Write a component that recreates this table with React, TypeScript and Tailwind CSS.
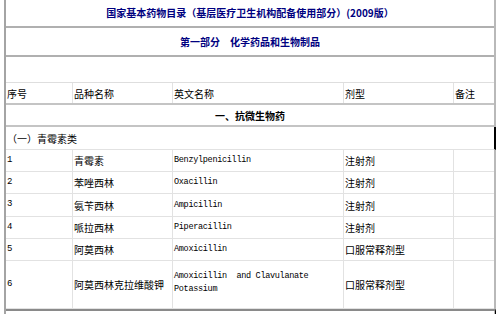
import React from "react";

const cjk = "font-['Noto_Sans_CJK_SC',sans-serif]";
const mono = "font-['Liberation_Mono','Noto_Sans_CJK_SC',monospace]";

const rows: [string, string, string, string, string][] = [
  ["1", "青霉素", "Benzylpenicillin", "注射剂", "h-[22px]"],
  ["2", "苯唑西林", "Oxacillin", "注射剂", "h-[22px]"],
  ["3", "氨苄西林", "Ampicillin", "注射剂", "h-[23px]"],
  ["4", "哌拉西林", "Piperacillin", "注射剂", "h-[22px]"],
  ["5", "阿莫西林", "Amoxicillin", "口服常释剂型", "h-[22px]"],
];

function Cells({ h, n, zh, en, form, enNode }: { h: string; n: string; zh: string; en?: string; form: string; enNode?: React.ReactNode }) {
  return (
    <div className={`flex ${h} border-b border-[#e2e2e2] items-center`}>
      <div className={`w-[67px] h-full flex items-center pl-px text-[9px] ${mono} border-r border-[#e2e2e2]`}>{n}</div>
      <div className={`w-[100px] h-full flex items-center pl-px text-[10px] ${cjk} border-r border-[#e2e2e2]`}>{zh}</div>
      <div className={`w-[171px] h-full flex items-center pl-px text-[8.5px] tracking-[-0.3px] ${mono} border-r border-[#e2e2e2]`}>{enNode ?? en}</div>
      <div className={`w-[110px] h-full flex items-center pl-px text-[10px] ${cjk} border-r border-[#e2e2e2]`}>{form}</div>
      <div className="flex-1 h-full"></div>
    </div>
  );
}

export default function App() {
  return (
    <div className="w-[500px] h-[314px] bg-white overflow-hidden text-black">
      <div className="ml-[4px] w-[492px] border-l-2 border-r-2 border-[#a4a4a4] border-r-[#b9b9b9]">
        <div className={`h-[28px] border-b-2 border-[#b0b0b0] flex items-start pt-[5px] justify-center text-[10px] font-bold text-[#000080] ${cjk}`}>
          国家基本药物目录（基层医疗卫生机构配备使用部分）(2009版）
        </div>
        <div className={`h-[29px] border-b-2 border-[#b0b0b0] flex items-center justify-center text-[10px] font-bold text-[#000080] ${cjk}`}>
          第一部分　化学药品和生物制品
        </div>
        <div className="h-[26px] border-b border-[#dedede]"></div>
        <div className={`flex h-[22px] border-b-2 border-[#c4c4c4] text-[10px] ${cjk}`}>
          <div className="w-[67px] flex items-center pl-px border-r border-[#e2e2e2]">序号</div>
          <div className="w-[100px] flex items-center pl-px border-r border-[#e2e2e2]">品种名称</div>
          <div className="w-[171px] flex items-center pl-px border-r border-[#e2e2e2]">英文名称</div>
          <div className="w-[110px] flex items-center pl-px border-r border-[#e2e2e2]">剂型</div>
          <div className="flex-1 flex items-center pl-px">备注</div>
        </div>
        <div className={`h-[22px] border-b-2 border-[#c4c4c4] flex items-center justify-center text-[10px] font-bold ${cjk}`}>
          一、抗微生物药
        </div>
        <div className={`h-[23px] border-b border-[#e2e2e2] flex items-center pl-px text-[10px] ${cjk} -mr-[2px] border-r-2 border-r-black`}>
          （一）青霉素类
        </div>
        {rows.map((r) => (
          <Cells key={r[0]} h={r[4]} n={r[0]} zh={r[1]} en={r[2]} form={r[3]} />
        ))}
        <Cells
          h="h-[48px]"
          n="6"
          zh="阿莫西林克拉维酸钾"
          form="口服常释剂型"
          enNode={
            <span className="whitespace-pre leading-[13px] -mt-[3px]">
              {"Amoxicillin  and Clavulanate\nPotassium"}
            </span>
          }
        />
        <div className="h-[10px] border-t-2 border-[#8a8a8a] -mr-[2px] border-r border-r-black"></div>
      </div>
    </div>
  );
}
